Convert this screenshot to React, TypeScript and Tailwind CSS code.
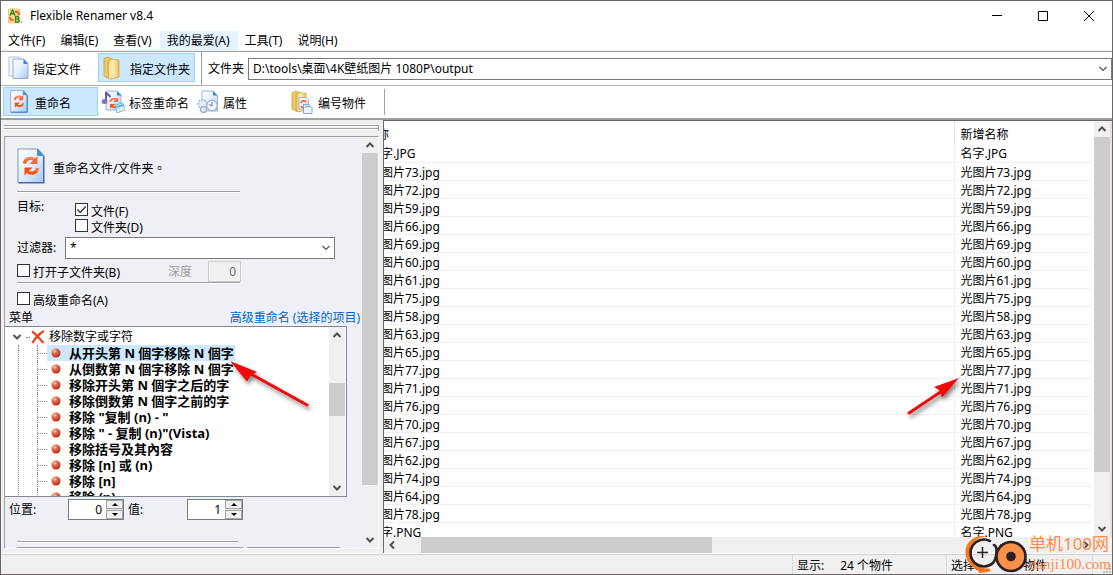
import React from "react";

const oldNames = [
  "字.JPG", "图片73.jpg", "图片72.jpg", "图片59.jpg", "图片66.jpg", "图片69.jpg", "图片60.jpg",
  "图片61.jpg", "图片75.jpg", "图片58.jpg", "图片63.jpg", "图片65.jpg", "图片77.jpg", "图片71.jpg",
  "图片76.jpg", "图片70.jpg", "图片67.jpg", "图片62.jpg", "图片74.jpg", "图片64.jpg", "图片78.jpg", "字.PNG",
];
const newNames = [
  "名字.JPG", "光图片73.jpg", "光图片72.jpg", "光图片59.jpg", "光图片66.jpg", "光图片69.jpg", "光图片60.jpg",
  "光图片61.jpg", "光图片75.jpg", "光图片58.jpg", "光图片63.jpg", "光图片65.jpg", "光图片77.jpg", "光图片71.jpg",
  "光图片76.jpg", "光图片70.jpg", "光图片67.jpg", "光图片62.jpg", "光图片74.jpg", "光图片64.jpg", "光图片78.jpg", "名字.PNG",
];
const treeItems = [
  "从开头第 N 個字移除 N 個字",
  "从倒数第 N 個字移除 N 個字",
  "移除开头第 N 個字之后的字",
  "移除倒数第 N 個字之前的字",
  '移除 "复制 (n) - "',
  '移除 " - 复制 (n)"(Vista)',
  "移除括号及其內容",
  "移除 [n] 或 (n)",
  "移除 [n]",
  "移除 (n)",
];
const menus = ["文件(F)", "编辑(E)", "查看(V)", "我的最爱(A)", "工具(T)", "说明(H)"];

function Gradients() {
  return (
    <svg className="absolute size-0" aria-hidden="true">
      <defs>
        <linearGradient id="page" x1="0" y1="0" x2="1" y2="1">
          <stop offset="0" stopColor="#ffffff" />
          <stop offset="0.5" stopColor="#e4effd" />
          <stop offset="1" stopColor="#a3c6f6" />
        </linearGradient>
        <linearGradient id="folder" x1="0" y1="0" x2="1" y2="0">
          <stop offset="0" stopColor="#e5bd55" />
          <stop offset="0.45" stopColor="#fff0b4" />
          <stop offset="1" stopColor="#e8bf58" />
        </linearGradient>
        <linearGradient id="swirl" x1="0" y1="0" x2="0" y2="1">
          <stop offset="0" stopColor="#f9835a" />
          <stop offset="1" stopColor="#f4500f" />
        </linearGradient>
        <radialGradient id="ball" cx="0.35" cy="0.3" r="0.75">
          <stop offset="0" stopColor="#ffd9cc" />
          <stop offset="0.35" stopColor="#ec6a4a" />
          <stop offset="1" stopColor="#a82a12" />
        </radialGradient>
      </defs>
    </svg>
  );
}

function Swirl() {
  return (
    <g fill="none" stroke="url(#swirl)" strokeWidth="3.2">
      <path d="M7.500 15.500c.6-5 6.500-6.800 10.500-3.400" />
      <path d="M20.500 20c-.6 5-6.500 6.800-10.500 3.400" />
      <path d="M20.500 8v8h-8z" fill="#f76a38" stroke="none" />
      <path d="M7.500 27.500v-8h8z" fill="#f4500f" stroke="none" />
    </g>
  );
}

function RenameIcon({ className }: { className: string }) {
  return (
    <svg viewBox="0 0 28 36" preserveAspectRatio="none" className={className} aria-hidden="true">
      <path d="M1 1h19.500l6 6.500V34.500H1z" fill="url(#page)" stroke="#7d96c6" />
      <path d="M26.800 8v26.800H1.500" fill="none" stroke="#4c68a8" strokeWidth="1.500" />
      <path d="M20.500 1v6.500h6z" fill="#2e93e8" stroke="#3a78c8" strokeWidth=".7" />
      <Swirl />
    </svg>
  );
}

function FilesIcon() {
  return (
    <svg viewBox="0 0 22 24" className="h-6 w-[22px]" aria-hidden="true">
      <path d="M1 1h10l4 4v15H1z" fill="#f4f8ff" stroke="#9db3d8" strokeWidth=".8" />
      <path d="M5 3h11l4 4.500V22.500H5z" fill="url(#page)" stroke="#8199c6" strokeWidth=".8" />
      <path d="M15.500 3v5H20z" fill="#2b8be2" />
    </svg>
  );
}

function FolderIcon() {
  return (
    <svg viewBox="0 0 18 24" className="h-6 w-[18px]" aria-hidden="true">
      <path d="M1 2.500 5 1l3 1.500V21l-2 1.500L1 20z" fill="#eecb6a" stroke="#c99a35" strokeWidth=".8" />
      <path d="M5 4.500 8 3l8 1v17l-9 2-2-1.500z" fill="url(#folder)" stroke="#cfa244" strokeWidth=".8" />
      <path d="M7 6v16.500" stroke="#fff7d0" />
    </svg>
  );
}

function TagRenameIcon() {
  return (
    <svg viewBox="0 0 24 24" className="size-6" aria-hidden="true">
      <path d="M5 1h11l4 4v15H5z" fill="url(#page)" stroke="#8aa4d2" strokeWidth=".8" />
      <path d="M16 1v4.500h4.500z" fill="#2b8be2" />
      <path d="M5 2v9M5 2.500l4.500 4.500" fill="none" stroke="#5b5ea4" strokeWidth="2" />
      <ellipse cx="3.600" cy="11.500" rx="3" ry="2.500" fill="#7478bd" />
      <g transform="translate(4.500 3) scale(.62 .56)"><Swirl /></g>
      <path d="m14 15 8-2 2 7-8 3z" fill="#d8f0fb" stroke="#70a9c9" strokeWidth=".8" />
      <path d="m15 17 8-2" stroke="#6ab0d8" strokeWidth="2" />
    </svg>
  );
}

function PropertiesIcon() {
  return (
    <svg viewBox="0 0 22 24" className="h-6 w-[22px]" aria-hidden="true">
      <path d="M5 1h11l4.500 4.500V21H5z" fill="url(#page)" stroke="#8aa4d2" strokeWidth=".8" />
      <path d="M16 1v4.500h4.500z" fill="#2b8be2" />
      <circle cx="5.500" cy="14" r="4.200" fill="#e6eefb" stroke="#a5b7d4" strokeWidth="1.600" strokeDasharray="2 1" />
      <circle cx="6.500" cy="19.500" r="3" fill="#dce7f8" stroke="#9fb2d2" strokeWidth="1.400" />
      <circle cx="15" cy="15.500" r="5.200" fill="#f6faff" stroke="#a3b8da" strokeWidth="1.500" />
      <path d="M15 12v4l-3-1.500" fill="none" stroke="#5877ad" />
    </svg>
  );
}

function NumberIcon() {
  return (
    <svg viewBox="0 0 22 24" className="h-6 w-[22px]" aria-hidden="true">
      <path d="M1 3 5 1l3 1.500V20l-2 1.500L1 19z" fill="#eecb6a" stroke="#c99a35" strokeWidth=".8" />
      <path d="M5 4 8 2.500l7 1V20l-8 2-2-1.500z" fill="url(#folder)" stroke="#cfa244" strokeWidth=".8" />
      <path d="M8 7.500h7l2.500 2.500v9H8z" fill="url(#page)" stroke="#8aa4d2" strokeWidth=".8" />
      <path d="M10 13c1-3 4-3 5-1M10 16c1 2 4 2 5 0" fill="none" stroke="#f4622b" strokeWidth="1.600" />
      <path d="M12.500 14.500h5.500l3 3v6h-8.500z" fill="#eef5ff" stroke="#6f8fca" strokeWidth=".8" />
      <path d="M14 18c1-2 3-2 5-1" fill="none" stroke="#5a7fc4" />
    </svg>
  );
}

function AppIcon() {
  return (
    <svg viewBox="0 0 15 16" className="h-4 w-[15px]" aria-hidden="true">
      <path d="M.5 1h11v14H.5z" fill="#fbdc86" stroke="#d8b860" strokeWidth=".6" />
      <path d="M7 4c3-1 4 1 4 3M5.500 12C3 12.500 2 11 2 9" fill="none" stroke="#f0582a" strokeWidth="1.900" />
      <path d="M2 7.500 4.500 2 7 7.500M3 5.700h3" fill="none" stroke="#2c8a2c" strokeWidth="1.500" />
      <path d="M7.500 8.500H10q1.500 1.200 0 2.500H7.500zM7.500 11h3q1.500 1.500 0 3h-3z" fill="none" stroke="#2c8a2c" strokeWidth="1.300" />
      <circle cx="13.500" cy="14" r=".8" fill="#8a6a20" />
    </svg>
  );
}

type Dir = "up" | "down" | "left" | "right";
const chevrons: Record<Dir, string> = {
  up: "M1.500 7 5 3.500 8.500 7",
  down: "M1.500 3 5 6.500 8.500 3",
  left: "M7 1.500 3.500 5 7 8.500",
  right: "M3 1.500 6.500 5 3 8.500",
};

function Chevron({ dir, thin }: { dir: Dir; thin?: boolean }) {
  return (
    <svg viewBox="0 0 10 10" className="size-[10px]" aria-hidden="true">
      <path d={chevrons[dir]} fill="none" stroke={thin ? "#555" : "#505050"} strokeWidth={thin ? 1.2 : 2} />
    </svg>
  );
}

function ScrollButton({ dir }: { dir: Dir }) {
  return (
    <button type="button" aria-label={dir} className="grid size-4 shrink-0 place-items-center">
      <Chevron dir={dir} />
    </button>
  );
}

function VScroll({ before, size, after }: { before: string; size: string; after: string }) {
  return (
    <div className="flex w-4 shrink-0 flex-col bg-[#f0f0f0]">
      <ScrollButton dir="up" />
      <div className="flex min-h-0 flex-1 flex-col">
        <div className={before} />
        <div className={"bg-[#cdcdcd] " + size} />
        <div className={after} />
      </div>
      <ScrollButton dir="down" />
    </div>
  );
}

function Check({ label, checked }: { label: string; checked?: boolean }) {
  return (
    <label className="flex h-4 items-start gap-[3px] whitespace-nowrap">
      <span className="grid size-[13px] shrink-0">
        <input
          type="checkbox"
          defaultChecked={checked}
          className="peer col-start-1 row-start-1 size-[13px] appearance-none border border-[#333] bg-white"
        />
        <svg viewBox="0 0 13 13" className="pointer-events-none invisible col-start-1 row-start-1 size-[13px] peer-checked:visible" aria-hidden="true">
          <path d="m2.500 6.500 2.700 3L10.700 3.500" fill="none" stroke="#333" strokeWidth="1.300" />
        </svg>
      </span>
      <span className="pt-px">{label}</span>
    </label>
  );
}

function Combo({ label, value, id }: { label: string; value: string; id: string }) {
  return (
    <div className="grid h-[22px] min-w-0 flex-1 items-center">
      <select
        id={id}
        aria-label={label}
        className="col-start-1 row-start-1 h-[22px] w-full appearance-none border border-[#7a7a7a] bg-white pr-5 pl-1 leading-4"
      >
        <option>{value}</option>
      </select>
      <span className="pointer-events-none col-start-1 row-start-1 mr-1 justify-self-end">
        <Chevron dir="down" thin />
      </span>
    </div>
  );
}

function Spinner({ id, value }: { id: string; value: string }) {
  return (
    <div className="flex h-[21px] w-14 border border-[#7a7a7a] bg-white">
      <input id={id} defaultValue={value} className="w-[37px] min-w-0 bg-transparent pr-1 text-right outline-none" />
      <div className="flex flex-1 flex-col gap-px bg-[#e5e5e5]">
        {["up", "down"].map((dir) => (
          <button
            key={dir}
            type="button"
            aria-label={dir}
            className="grid flex-1 place-items-center border border-[#a6a6a6] bg-[#f0f0f0]"
          >
            <svg viewBox="0 0 6 3" className="h-[3px] w-[6px]" aria-hidden="true">
              <path d={dir === "up" ? "M0 3 3 0l3 3z" : "M0 0l3 3 3-3z"} fill="#000" />
            </svg>
          </button>
        ))}
      </div>
    </div>
  );
}

function Tool({ icon, label, active, className }: { icon: React.ReactNode; label: string; active?: boolean; className: string }) {
  return (
    <button
      type="button"
      className={
        "flex h-[29px] shrink-0 items-center whitespace-nowrap border " +
        (active ? "border-[#99d1ff] bg-[#cce8ff] " : "border-transparent ") +
        className
      }
    >
      {icon}
      <span className="pt-[5px]">{label}</span>
    </button>
  );
}

function Rule({ className }: { className: string }) {
  return <div className={"h-[2px] border-t border-[#a0a0a0] bg-white " + className} />;
}

function SidePanel() {
  return (
    <aside className="flex w-[383px] shrink-0 flex-col border-r border-[#696969] bg-[#f0f0f0] pt-[5px] pr-1 pb-1 pl-[3px]">
      <div className="flex h-[6px] shrink-0 flex-col gap-px border-r border-[#a0a0a0]">
        <Rule className="" />
        <Rule className="" />
      </div>
      <div className="mt-[5px] flex min-h-0 flex-1 border-t border-r border-b border-l border-t-[#a0a0a0] border-r-white border-b-white border-l-[#a0a0a0] bg-[#eff0f5]">
        <div className="min-w-0 flex-1 overflow-hidden">
          <div className="flex items-center gap-2 pt-[11px] pl-3">
            <RenameIcon className="h-9 w-7" />
            <h1 className="pt-1">
              重命名文件/文件夹<span className="font-['Noto_Sans_CJK_TC',sans-serif]">。</span>
            </h1>
          </div>
          <Rule className="mt-[7px] ml-3 w-[223px]" />
          <div className="mt-[6px] flex pl-3">
            <span className="w-[58px] leading-4">目标:</span>
            <div className="pt-1">
              <Check label="文件(F)" checked />
              <Check label="文件夹(D)" />
            </div>
          </div>
          <div className="mt-[2px] flex items-center pr-[27px] pl-3">
            <label htmlFor="filter" className="w-12">过滤器:</label>
            <Combo id="filter" label="过滤器" value="*" />
          </div>
          <div className="mt-[2px] flex h-[21px] items-center pl-3">
            <Check label="打开子文件夹(B)" />
            <label htmlFor="depth" className="ml-auto text-[#a0a0a0]">深度</label>
            <input
              id="depth"
              disabled
              defaultValue="0"
              className="mr-[121px] ml-4 h-[21px] w-[33px] border border-[#ccc] bg-[#f0f0f0] pr-1 text-right text-[#6d6d6d]"
            />
          </div>
          <Rule className="ml-3 w-[223px]" />
          <div className="mt-2 pl-3">
            <Check label="高级重命名(A)" />
          </div>
          <div className="mt-[2px] flex justify-between pr-[2px] pl-1">
            <span>菜单</span>
            <a href="#advanced" className="text-[#0066cc]">高级重命名 (选择的项目)</a>
          </div>
          <div className="mr-[15px] flex h-[171px] border border-l-0 border-[#828790] bg-white">
            <ul className="min-w-0 flex-1 overflow-hidden pt-[2px]">
              <li>
                <div className="flex h-4 items-center">
                  <span className="ml-[7px]"><Chevron dir="down" /></span>
                  <span className="ml-1 w-1 border-t border-dotted border-[#808080]" />
                  <svg viewBox="0 0 14 14" className="ml-px size-[14px]" aria-hidden="true">
                    <path d="M1 1.500C5 4 9 9 12.500 13M13 1C8 4 4 8 1.500 13" fill="none" stroke="#ee3f20" strokeWidth="2.200" />
                  </svg>
                  <span className="ml-1">移除数字或字符</span>
                </div>
                <ul className="ml-[13px] border-l border-dotted border-[#808080]">
                  {treeItems.map((item, i) => (
                    <li key={item} className="ml-[18px] flex h-4 items-center border-l border-dotted border-[#808080]">
                      <span className="w-[9px] border-t border-dotted border-[#808080]" />
                      <button
                        type="button"
                        className={"flex h-4 items-center gap-2 pr-px pl-1 text-[13px] leading-4 font-bold whitespace-nowrap " + (i === 0 ? "bg-[#cce8ff]" : "")}
                      >
                        <svg viewBox="0 0 10 10" className="size-[10px]" aria-hidden="true">
                          <circle cx="5" cy="5" r="4.500" fill="url(#ball)" />
                        </svg>
                        {item}
                      </button>
                    </li>
                  ))}
                </ul>
              </li>
            </ul>
            <VScroll before="flex-[40]" size="flex-[32]" after="flex-[64]" />
            <div className="w-px" />
          </div>
          <div className="mt-[2px] flex items-center pl-1">
            <label htmlFor="position" className="w-[59px]">位置:</label>
            <Spinner id="position" value="0" />
            <label htmlFor="count" className="w-[63px] pl-1">值:</label>
            <Spinner id="count" value="1" />
          </div>
          <Rule className="mt-[21px] ml-3 w-[221px]" />
          <div className="mt-1 flex gap-1 pl-3">
            <div className="h-2 w-[226px] border border-[#a0a0a0]" />
            <div className="h-2 w-[93px] border-t border-[#a0a0a0]" />
          </div>
        </div>
        <VScroll before="" size="flex-[331]" after="flex-[47]" />
      </div>
    </aside>
  );
}

function FileList() {
  return (
    <main className="flex min-w-0 flex-1 flex-col border-t border-[#696969] bg-white">
      <div className="flex min-h-0 flex-1">
        <div className="min-w-0 flex-1 overflow-hidden pr-[2px]">
          <table className="w-full table-fixed border-collapse">
            <thead>
              <tr className="h-[23px]">
                <th className="overflow-hidden border-r border-[#e0e0e0] p-0 pt-1 text-left font-normal">
                  <div className="-ml-[7px]">称</div>
                </th>
                <th className="w-[138px] p-0 pt-1 pl-[6px] text-left font-normal">新增名称</th>
              </tr>
            </thead>
            <tbody>
              {newNames.map((name, i) => (
                <tr key={name} className="h-[18px] border-b border-[#f0f0f0]">
                  <td className="overflow-hidden border-r border-[#eef0f4] p-0 pt-[3px] leading-[14px]">
                    <div className="-ml-[3px]">{oldNames[i]}</div>
                  </td>
                  <td className="p-0 pt-[3px] pl-[6px] leading-[14px]">{name}</td>
                </tr>
              ))}
            </tbody>
          </table>
        </div>
        <VScroll before="" size="flex-[333]" after="flex-[49]" />
        <div className="w-[2px] bg-[#e3e3e3]" />
      </div>
      <div className="flex h-4 shrink-0 bg-[#f0f0f0]">
        <ScrollButton dir="left" />
        <div className="flex flex-1">
          <div className="flex-[21]" />
          <div className="flex-[290] bg-[#cdcdcd]" />
          <div className="flex-[365]" />
        </div>
        <ScrollButton dir="right" />
        <div className="w-[18px]" />
      </div>
    </main>
  );
}

function Arrows() {
  return (
    <>
      <svg viewBox="0 0 92 60" className="pointer-events-none absolute top-[354px] left-[224px] h-[60px] w-[92px] drop-shadow-[2px_3px_2px_rgba(0,0,0,0.5)]" aria-hidden="true">
        <path d="M82 50 26 19" stroke="#f40808" strokeWidth="3" strokeLinecap="round" />
        <path d="M5 6 32 17l-6 3-4 6.500z" fill="#f40808" />
      </svg>
      <svg viewBox="0 0 62 50" className="pointer-events-none absolute top-[371px] left-[903px] h-[50px] w-[62px] drop-shadow-[2px_3px_2px_rgba(0,0,0,0.5)]" aria-hidden="true">
        <path d="M5 41 38 19" stroke="#f40808" strokeWidth="3" strokeLinecap="round" />
        <path d="M55 6 30 15l6 3.500 2 7z" fill="#f40808" />
      </svg>
    </>
  );
}

function Watermark() {
  return (
    <div className="pointer-events-none absolute right-px bottom-0 flex h-10 items-center gap-px">
      <svg viewBox="0 0 64 40" className="h-10 w-16" aria-hidden="true">
        <path d="M22 2.500C9 0 1 10 1.500 19c0 7 6 14 12 17l2 3 11-1.500-1-3C14 35 5 27 5.500 18 6 9 14 3 22 2.500z" fill="#ff7516" />
        <path d="M26 7A13.500 13.500 0 1 0 29 29C33 24 34 12 30 11" fill="none" stroke="#2a2022" strokeWidth="2.600" strokeLinecap="round" />
        <path d="M18.500 13v11M13 18.500h11" stroke="#2a2022" strokeWidth="1.500" />
        <path d="m36 11 4 2" stroke="#2a2022" strokeWidth="2.500" />
        <circle cx="47" cy="22.500" r="14.500" fill="#fb9048" stroke="#2a2022" strokeWidth="2.600" />
        <circle cx="47" cy="22.500" r="4.800" fill="#2a2022" />
      </svg>
      <div className="flex flex-col text-[#fa8d4b]">
        <span className="text-[17px] leading-5">单机100网</span>
        <span className="font-['Liberation_Serif',serif] text-[15px] leading-5">danji100.com</span>
      </div>
    </div>
  );
}

export default function App() {
  return (
    <div className="relative flex h-screen flex-col overflow-hidden border border-[#6b6464] bg-white font-['Noto_Sans','Noto_Sans_CJK_SC',sans-serif] text-[12px] leading-4 text-black">
      <Gradients />
      <header className="flex h-[30px] shrink-0 items-center pl-[7px]">
        <AppIcon />
        <span className="ml-[7px] flex-1">Flexible Renamer v8.4</span>
        {[
          ["最小化", "M1 5.500h10"],
          ["最大化", "M1.500 1.500h9v9h-9z"],
          ["关闭", "M1 1l10 10M11 1 1 11"],
        ].map(([name, d]) => (
          <button key={name} type="button" aria-label={name} className="grid h-[30px] w-[46px] place-items-center">
            <svg viewBox="0 0 12 12" className="size-3" aria-hidden="true">
              <path d={d} fill="none" stroke="#000" />
            </svg>
          </button>
        ))}
      </header>
      <nav className="flex h-[20px] shrink-0 items-center border-b border-[#f0f0f0]">
        {menus.map((m, i) => (
          <button key={m} type="button" className={"h-[19px] pr-2 pl-[7px] whitespace-nowrap " + (i === 3 ? "bg-[#e5f3ff]" : "")}>
            {m}
          </button>
        ))}
      </nav>
      <div className="flex h-[35px] shrink-0 items-start border-t border-b border-t-[#a0a0a0] border-b-[#b0b0b4] pl-[2px]">
        <Tool icon={<FilesIcon />} label="指定文件" className="mt-px w-[95px] gap-[3px] pl-1" />
        <Tool icon={<FolderIcon />} label="指定文件夹" active className="mt-px w-[97px] gap-[9px] pl-1" />
        <div className="mx-[6px] h-full border-l border-[#a0a0a0]" />
        <label htmlFor="folder-path" className="w-[40px] self-center">文件夹</label>
        <div className="flex flex-1 self-center">
          <Combo id="folder-path" label="文件夹" value={"D:\\tools\\桌面\\4K壁纸图片 1080P\\output"} />
        </div>
      </div>
      <div className="flex h-[34px] shrink-0 items-start border-b-2 border-[#a0a0a0] pt-px pl-[2px]">
        <Tool icon={<RenameIcon className="h-[23px] w-[18px]" />} label="重命名" active className="w-[95px] gap-[7px] pl-[6px]" />
        <Tool icon={<TagRenameIcon />} label="标签重命名" className="w-[95px] gap-1 pl-[2px]" />
        <Tool icon={<PropertiesIcon />} label="属性" className="w-[95px] gap-1 pl-[3px]" />
        <Tool icon={<NumberIcon />} label="编号物件" className="w-[95px] gap-[5px] pl-[2px]" />
        <div className="mt-[2px] ml-px h-[26px] border-l border-[#a0a0a0]" />
      </div>
      <div className="flex min-h-0 flex-1">
        <SidePanel />
        <FileList />
      </div>
      <footer className="mt-px flex h-5 shrink-0 items-stretch border-t border-[#d0d0d0] bg-[#f0f0f0]">
        <div className="flex-1" />
        <div className="flex w-[154px] items-center gap-4 border-l border-[#d9d9d9] pt-[2px] pl-1">
          <span>显示:</span>
          <span>24 个物件</span>
        </div>
        <div className="flex w-[146px] items-center border-l border-[#d9d9d9] pt-[2px] pl-1">
          <span className="w-[72px]">选择:</span>
          <span>物件</span>
        </div>
        <div className="flex w-5 items-end justify-end border-l border-[#d9d9d9]">
          <svg viewBox="0 0 10 10" className="size-[10px]" aria-hidden="true">
            <path d="M7 1h2v2H7zM7 4h2v2H7zM4 4h2v2H4zM7 7h2v2H7zM4 7h2v2H4zM1 7h2v2H1z" fill="#bfbfbf" />
          </svg>
        </div>
      </footer>
      <Arrows />
      <Watermark />
    </div>
  );
}
